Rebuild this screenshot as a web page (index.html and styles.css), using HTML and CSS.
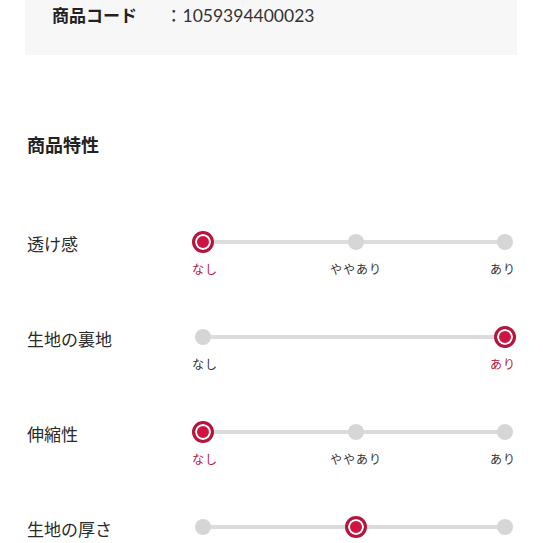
FILE: index.html
```html
<!DOCTYPE html>
<html lang="ja">
<head>
    <meta charset="UTF-8">
    <meta name="viewport" content="width=device-width, initial-scale=1.0">
    <title>商品特性</title>
    <link rel="stylesheet" href="styles.css">
</head>
<body>

    <div class="spec-box">
        <div class="spec-row">
            <span class="spec-name">商品コード</span>
            <span class="spec-value">：1059394400023</span>
        </div>
    </div>

    <h2 class="section-title">商品特性</h2>

    <div class="traits">
        <div class="trait">
            <div class="trait-name">透け感</div>
            <div class="scale">
                <div class="dots">
                    <span class="stop"><span class="dot active"></span></span>
                    <span class="stop"><span class="dot"></span></span>
                    <span class="stop"><span class="dot"></span></span>
                </div>
                <div class="ticks">
                    <span class="active">なし</span>
                    <span>ややあり</span>
                    <span>あり</span>
                </div>
            </div>
        </div>

        <div class="trait">
            <div class="trait-name">生地の裏地</div>
            <div class="scale">
                <div class="dots">
                    <span class="stop"><span class="dot"></span></span>
                    <span class="stop"><span class="dot active"></span></span>
                </div>
                <div class="ticks">
                    <span>なし</span>
                    <span class="active">あり</span>
                </div>
            </div>
        </div>

        <div class="trait">
            <div class="trait-name">伸縮性</div>
            <div class="scale">
                <div class="dots">
                    <span class="stop"><span class="dot active"></span></span>
                    <span class="stop"><span class="dot"></span></span>
                    <span class="stop"><span class="dot"></span></span>
                </div>
                <div class="ticks">
                    <span class="active">なし</span>
                    <span>ややあり</span>
                    <span>あり</span>
                </div>
            </div>
        </div>

        <div class="trait">
            <div class="trait-name">生地の厚さ</div>
            <div class="scale">
                <div class="dots">
                    <span class="stop"><span class="dot"></span></span>
                    <span class="stop"><span class="dot active"></span></span>
                    <span class="stop"><span class="dot"></span></span>
                </div>
            </div>
        </div>
    </div>

</body>
</html>
```

FILE: styles.css
```css
body {
    margin: 0;
    font-family: Lato, "Noto Sans CJK JP", sans-serif;
    color: #222;
    background-color: #fff;
}
.spec-box {
    margin: 0 26px 0 25px;
    height: 55px;
    box-sizing: border-box;
    padding: 4px 0 0 27px;
    background-color: #f7f7f7;
}
.spec-row {
    display: flex;
    line-height: 24px;
}
.spec-name {
    width: 113px;
    font-size: 17px;
    font-weight: bold;
}
.spec-value {
    font-size: 17.5px;
    color: #333;
}
.section-title {
    margin: 77px 0 0 27px;
    font-size: 18px;
    line-height: 26px;
    font-weight: bold;
}
.traits {
    margin: 73px 27px 0 27px;
}
.trait {
    display: flex;
    margin-bottom: 48px;
}
.trait-name {
    width: 165px;
    padding-top: 2px;
    font-size: 17px;
    line-height: 24px;
    color: #2a2a2a;
}
.scale {
    flex: 1;
}
.dots {
    position: relative;
    display: flex;
    justify-content: space-between;
}
.dots::before {
    content: "";
    position: absolute;
    left: 11px;
    right: 11px;
    top: 9px;
    height: 4px;
    background-color: #dcdcdc;
}
.stop {
    position: relative;
    width: 22px;
    height: 22px;
    display: flex;
    align-items: center;
    justify-content: center;
}
.stop:nth-child(2):not(:last-child) {
    margin-left: 4px;
}
.dot {
    width: 16px;
    height: 16px;
    border-radius: 50%;
    background-color: #d6d6d6;
}
.dot.active {
    width: 22px;
    height: 22px;
    box-sizing: border-box;
    border: 3px solid #b5143c;
    box-shadow: inset 0 0 0 2px #fff;
    background-color: #cf1443;
}
.ticks {
    display: flex;
    justify-content: space-between;
    margin-top: 9px;
    font-size: 12px;
    line-height: 16px;
    letter-spacing: 1px;
    color: #333;
}
.ticks span:nth-child(2):not(:last-child) {
    margin-left: 4px;
}
.ticks .active {
    color: #b3173f;
}
```
